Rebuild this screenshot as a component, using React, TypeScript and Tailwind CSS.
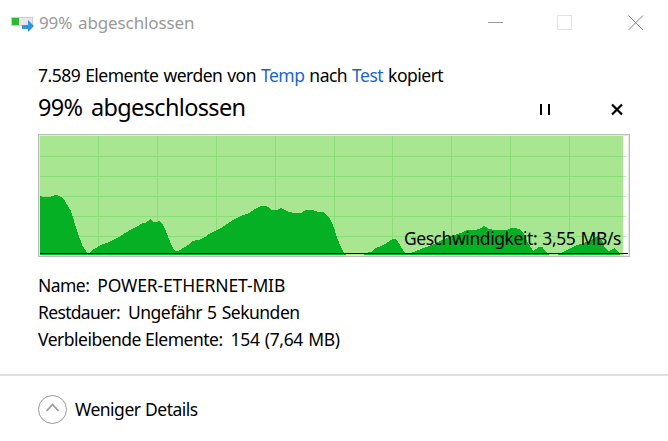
import { ReactNode } from "react";
import clsx from "clsx";

const columns = [60, 119, 178, 237, 296, 354, 413, 472, 531];
const rows = [22, 42, 62, 82, 102];

const speed =
  "2,61.3 4,62.7 12.7,62.7 16,61.3 20,61.3 24,63.3 27,66.7 29.7,71.7 32.7,76.7 35.3,84.7 38,93.3 41,102 43.7,110 46,114.3 49.3,118.7 51.3,118.7 " +
  "56,115 62.7,111 72,107.7 81.3,102.7 90.3,97 97,93.7 103.7,89.7 107.3,88.7 112.3,85.3 116,88 121.3,87.3 125.3,91.3 128,97.3 132,107.7 135.3,114.7 137.3,117.3 " +
  "140.7,116.7 148.7,112 155.3,106.7 160.7,106 166.7,103.3 170,100.3 182,94.7 194,86.7 204,81.7 210.3,79.3 217.3,75 222.7,72 228.7,72 234,76 239.3,76 242.7,74 " +
  "249.3,77.3 255.3,79 262.7,79 267.3,76.3 276,76.3 280,78 286,78 290.7,83 294,89 296.3,94.7 298,101 301,108.7 304,115.3 307,119.7 308.7,121 " +
  "325.3,121 328.7,118.7 333.3,117.7 338,114 345.3,111 351.3,107 356,104.3 359.3,106.7 362.7,112.3 366.7,118.3 369.3,119.3 374,118.7 382,115.3 392,111.7 402,107 " +
  "417,100.7 424,98.7 428,96.3 437,96.3 442,94.7 446,92 450.7,94.7 455.3,96 469.3,96 474,93.7 482,95 486,100 490,109 495.3,117 500.7,113.3 504.7,113.3 507.3,117.3 511.3,121 " +
  "519.3,121 526,117.3 539.3,111 552,106.7 560.7,101.3 564.7,107.3 566.7,113.3 570.7,117 576.7,114.3 581.3,118.7 582.7,121 2,121";

const CopyIcon = () => (
  <svg width="24" height="18" viewBox="0 0 24 18" className="shrink-0">
    <rect x="0.5" y="3.5" width="21" height="8" fill="#e8e6e8" stroke="#cfcccf" />
    <rect x="1" y="4" width="7" height="7" fill="#2db934" />
    <path d="M11 11h6V6l6 6-6 6v-3h-6z" fill="#2f94e6" />
  </svg>
);

const SpeedChart = () => (
  <svg
    width="592"
    height="123"
    viewBox="0 0 592 123"
    shapeRendering="crispEdges"
    className="block"
  >
    <rect x="0.5" y="0.5" width="591" height="122" fill="#fff" stroke="#bcbcbc" />
    <rect x="1.5" y="1.5" width="589" height="120" fill="none" stroke="#e6e6e6" />
    {rows.map((y) => (
      <rect key={y} x="585" y={y} width="4" height="1" fill="#c4f0be" />
    ))}
    <rect x="2" y="2" width="583" height="119" fill="#a8e691" />
    {rows.map((y) => (
      <rect key={y} x="2" y={y} width="583" height="1" fill="#8ade7a" />
    ))}
    {columns.map((x) => (
      <rect key={x} x={x} y="2" width="1" height="119" fill="#8ade7a" />
    ))}
    <polygon points={speed} fill="#06b025" />
    <rect x="2" y="119" width="588" height="1" fill="#000" />
  </svg>
);

type DetailProps = {
  label: string;
  labelClass: string;
  value: string;
  valueClass: string;
};

const Detail = ({ label, labelClass, value, valueClass }: DetailProps) => (
  <div className="flex h-[27px] items-center gap-2">
    <Text className={labelClass}>{label}</Text>
    <Text className={valueClass}>{value}</Text>
  </div>
);

const Text = ({ className, children }: { className: string; children: ReactNode }) => (
  <span className={clsx("whitespace-pre", className)}>{children}</span>
);

const App = () => {
  return (
    <div className="flex h-[441px] w-[668px] flex-col overflow-hidden bg-white font-['Noto_Sans',sans-serif] text-[17.5px] leading-[27px] text-black">
      {/* Title bar */}
      <div className="flex h-[45px] items-center pl-[11px]">
        <CopyIcon />
        <Text className="ml-1 text-[17px] tracking-[-0.12px] [word-spacing:1.5px] text-[#999]">
          99% abgeschlossen
        </Text>
        <svg
          width="156"
          height="16"
          viewBox="0 0 156 16"
          fill="none"
          className="mr-6 ml-auto"
        >
          <path d="M0 7.5h15" stroke="#999" />
          <rect x="69.5" y="0.5" width="14" height="14" stroke="#e6e2e2" />
          <path d="M140.500 .5l14.500 14.500M155 .5l-14.500 14.500" stroke="#888" />
        </svg>
      </div>

      <div className="flex flex-col px-[38px] pt-[17px]">
        <div className="flex h-[27px]">
          <Text className="tracking-[-0.5px] [word-spacing:0.85px]">
            7.589 Elemente werden von <span className="text-[#1a66cc]">Temp</span> nach{" "}
            <span className="text-[#1a66cc]">Test</span> kopiert
          </Text>
        </div>
        <div className="flex h-[37px] items-center">
          <Text className="text-[23.5px] tracking-[-0.65px] [word-spacing:3px]">
            99% abgeschlossen
          </Text>
          <svg
            width="84"
            height="13"
            viewBox="0 0 84 13"
            className="mt-1 mr-1.5 ml-auto"
          >
            <path d="M0 1h2v11H0zM8 1h2v11H8z" fill="#000" />
            <path d="M72 1.500l10 10M82 1.500l-10 10" stroke="#000" strokeWidth="2.200" />
          </svg>
        </div>

        <div className="relative mt-2">
          <SpeedChart />
          <Text className="absolute right-[9px] bottom-[5px] tracking-[-0.42px] [word-spacing:1px]">
            Geschwindigkeit: 3,55 MB/s
          </Text>
        </div>

        <div className="mt-[15px] flex flex-col">
          <Detail
            label="Name:"
            labelClass="tracking-[-0.55px]"
            value="POWER-ETHERNET-MIB"
            valueClass="tracking-[-0.15px]"
          />
          <Detail
            label="Restdauer:"
            labelClass="tracking-[-0.67px]"
            value="Ungefähr 5 Sekunden"
            valueClass="tracking-[-0.5px] [word-spacing:1px]"
          />
          <Detail
            label="Verbleibende Elemente:"
            labelClass="tracking-[-0.5px]"
            value="154 (7,64 MB)"
            valueClass="tracking-[-0.35px] [word-spacing:1px]"
          />
        </div>
      </div>

      {/* Footer */}
      <div className="mt-auto flex h-[67px] items-center border-t-2 border-[#e0e0e0] pl-[38px]">
        <svg width="29" height="29" viewBox="0 0 29 29" fill="none" className="mt-0.5">
          <circle cx="14.500" cy="14.500" r="14" stroke="#999" />
          <path d="M8.500 16l6-6.500 6 6.500" stroke="#a09a9a" strokeWidth="1.700" />
        </svg>
        <Text className="mt-0.5 ml-2 tracking-[-0.5px] [word-spacing:0.5px]">
          Weniger Details
        </Text>
      </div>
    </div>
  );
};

export default App;
